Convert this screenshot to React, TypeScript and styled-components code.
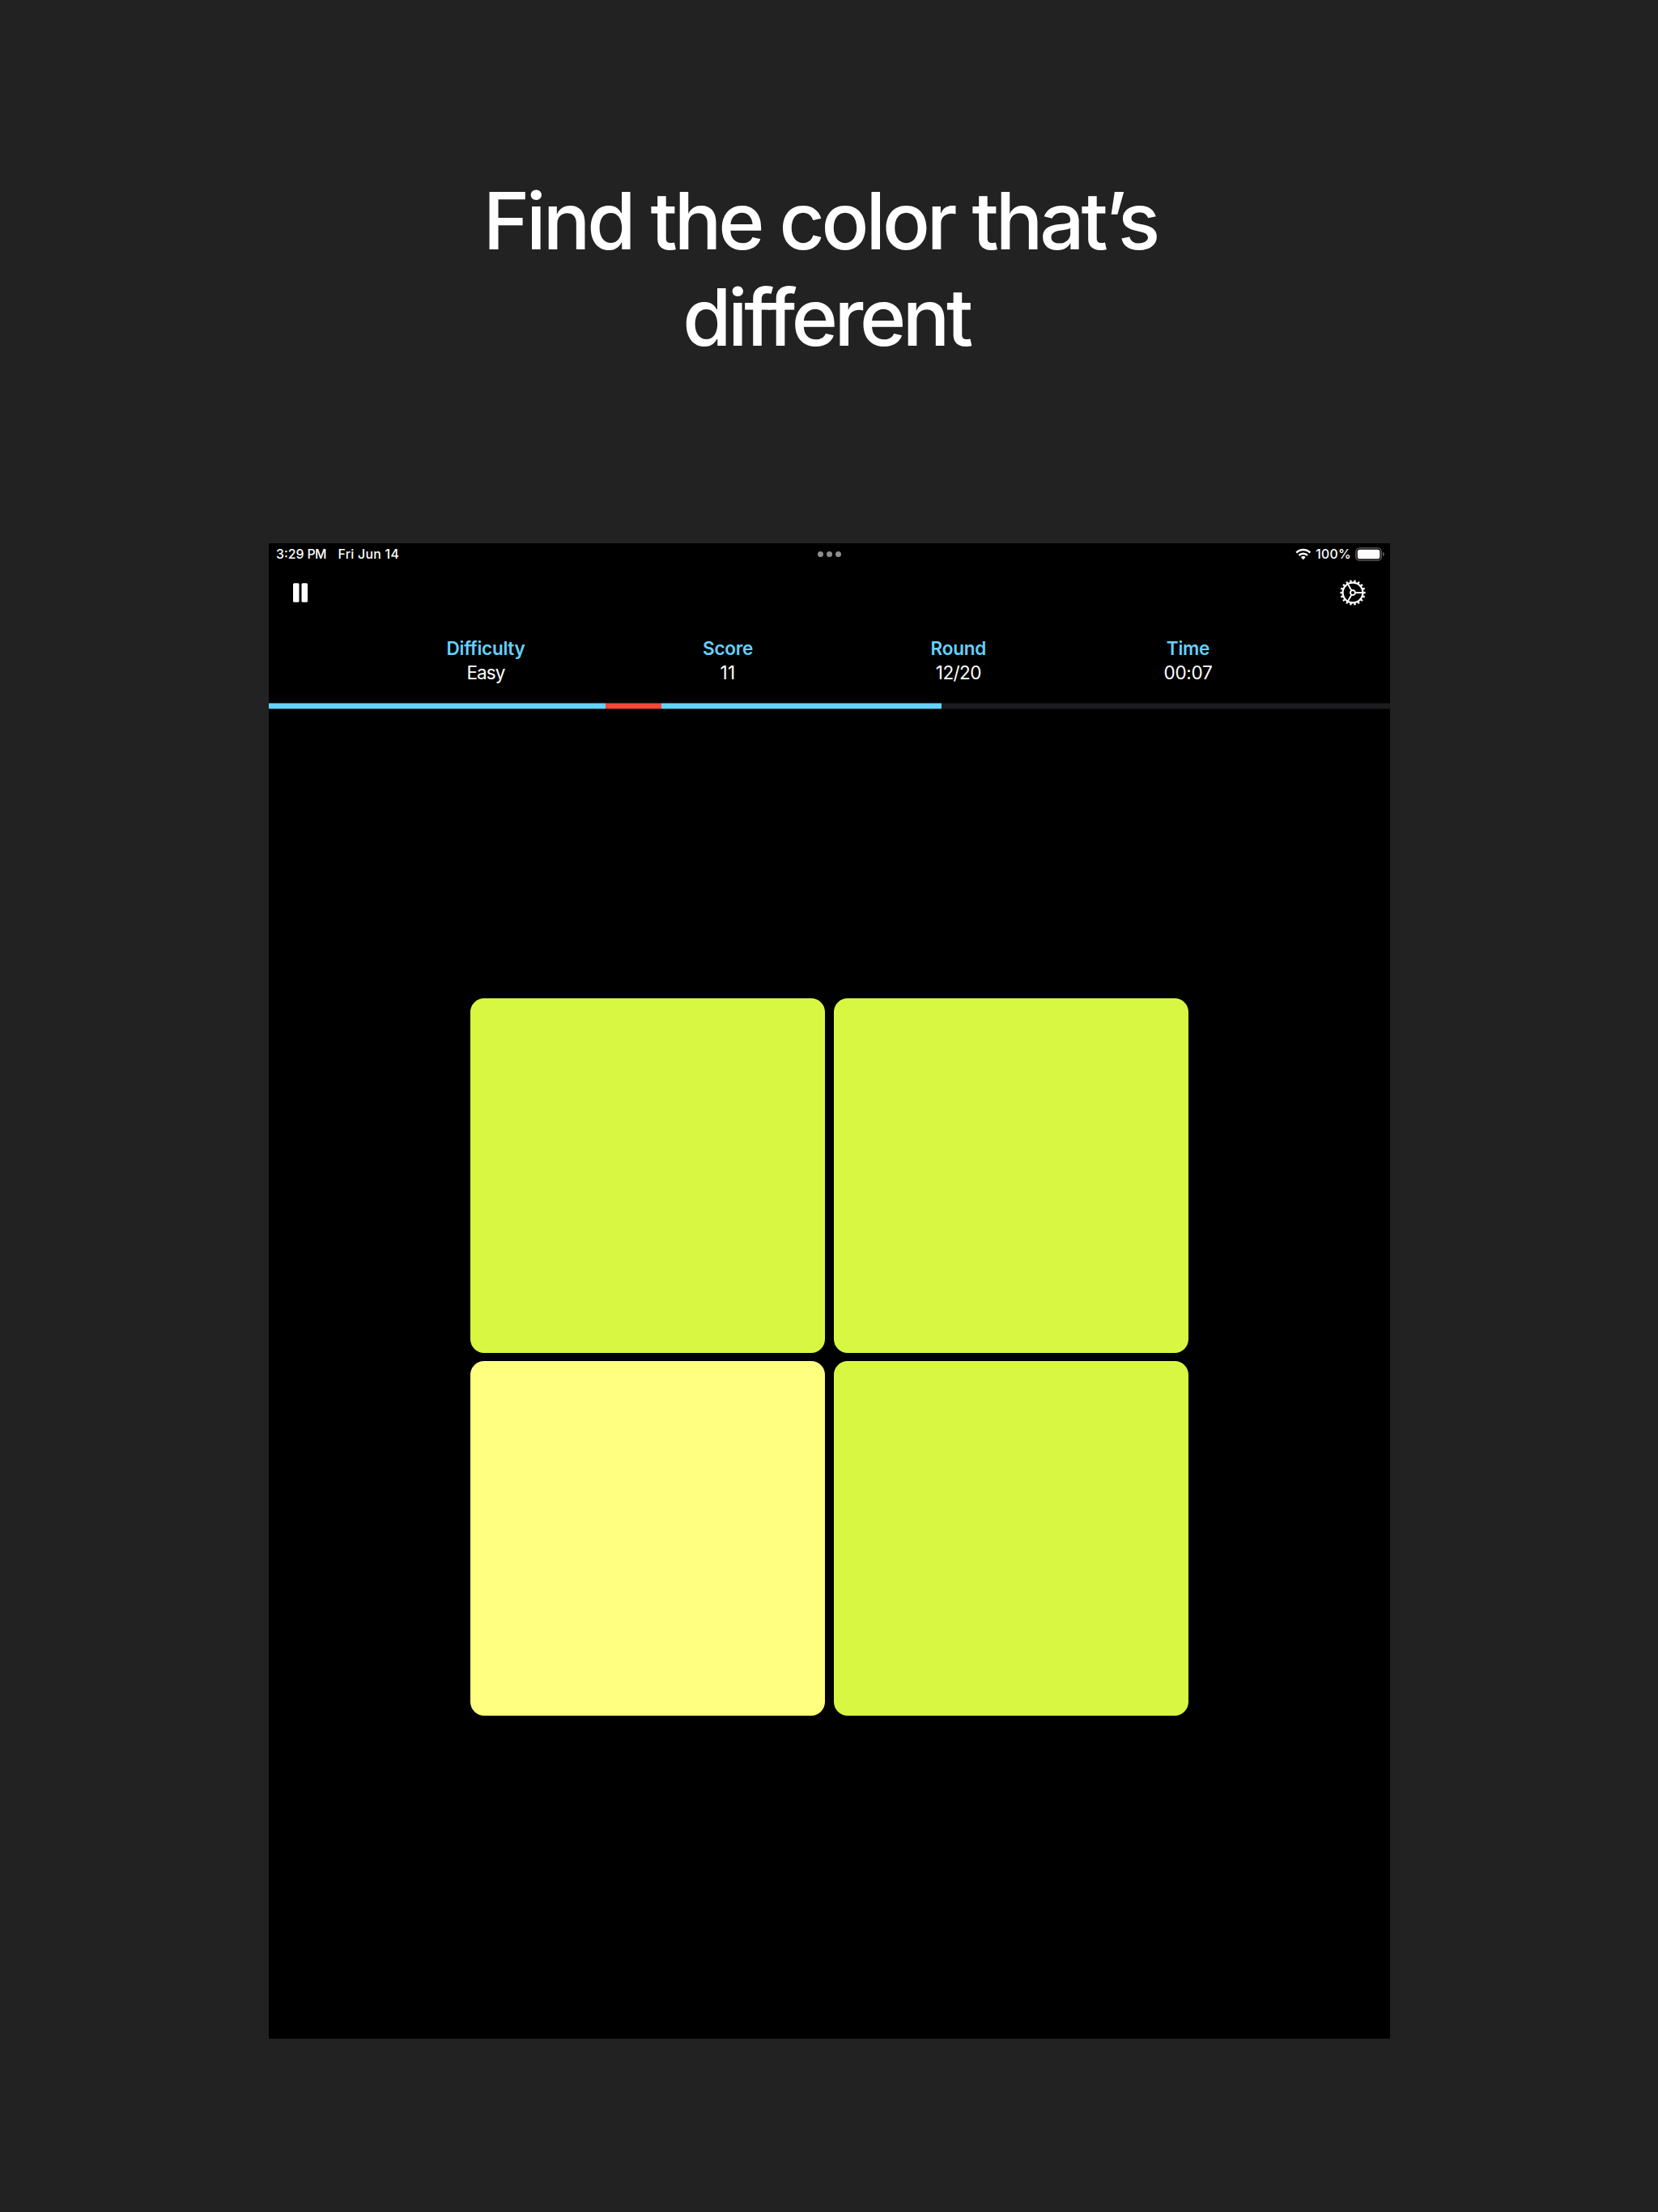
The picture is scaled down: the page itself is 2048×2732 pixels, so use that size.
import React from "react";
import styled, { createGlobalStyle } from "styled-components";

const GlobalStyle = createGlobalStyle`
  *, *::before, *::after { box-sizing: border-box; }
  body {
    margin: 0;
    background: #222222;
    color: #ffffff;
    font-family: Inter, "Liberation Sans", sans-serif;
  }
`;

const Page = styled.main`
  width: 2048px;
  height: 2732px;
  overflow: hidden;
  padding-top: 214px;
  display: flex;
  flex-direction: column;
`;

const Headline = styled.h1`
  margin: 0 0 218px;
  height: 239px;
  display: flex;
  flex-direction: column;
  align-items: center;
  font-size: 97.5px;
  font-weight: 530;
  line-height: 119.3px;
  white-space: nowrap;
`;

const HeadlineLine = styled.span<{ $tracking: number; $trailing: number }>`
  letter-spacing: ${(p) => p.$tracking}px;
  padding-right: ${(p) => p.$trailing}px;
`;

const Screen = styled.section`
  width: 1385px;
  height: 1847px;
  margin-left: 332px;
  background: #000000;
  display: flex;
  flex-direction: column;
`;

const StatusBar = styled.header`
  height: 27px;
  padding: 0 7px 0 9px;
  display: grid;
  grid-template-columns: 1fr auto 1fr;
  align-items: center;
  font-size: 15.8px;
  font-weight: 500;
  line-height: 27px;
  white-space: nowrap;
`;

const StatusGroup = styled.div<{ $end?: boolean }>`
  display: flex;
  align-items: center;
  justify-content: ${(p) => (p.$end ? "flex-end" : "flex-start")};
`;

const Meridiem = styled.span`
  margin-left: 4px;
  letter-spacing: -0.5px;
`;

const DateText = styled.span`
  margin-left: 14.5px;
  letter-spacing: 0.3px;
`;

const BatteryLevel = styled.span`
  margin: 0 5px 0 5.5px;
  letter-spacing: 0.3px;
`;

const Multitasking = styled.div`
  display: flex;
  gap: 4px;
  margin-right: 3px;
`;

const Dot = styled.i`
  width: 7px;
  height: 7px;
  border-radius: 50%;
  background: #8e8e8e;
`;

const NavBar = styled.nav`
  height: 67px;
  padding: 0 30px;
  display: flex;
  align-items: center;
  justify-content: space-between;
`;

const IconButton = styled.button`
  display: flex;
  padding: 0;
  border: 0;
  background: none;
  color: #ffffff;
`;

const Stats = styled.dl`
  margin: 21px 0 22px;
  display: flex;
  justify-content: space-evenly;
  font-size: 22.5px;
  line-height: 30px;
  text-align: center;
`;

const Stat = styled.div`
  display: flex;
  flex-direction: column;
  align-items: center;
`;

const StatLabel = styled.dt`
  color: #64d2ff;
  font-weight: 580;
  letter-spacing: -0.25px;
`;

const StatValue = styled.dd<{ $tracking?: number }>`
  margin: 0;
  letter-spacing: ${(p) => p.$tracking ?? 0}px;
`;

const Track = styled.div`
  height: 8px;
  display: grid;
  grid-template-columns: repeat(20, 1fr);
  background: #1c1c1e;
  box-shadow: inset 0 1px rgba(0, 0, 0, 0.5), inset 0 -1px rgba(0, 0, 0, 0.5);
`;

const Segment = styled.div<{ $wrong: boolean; $span: number }>`
  grid-column: span ${(p) => p.$span};
  background: ${(p) => (p.$wrong ? "#ff453a" : "#64d2ff")};
  box-shadow: inset 0 1px rgba(0, 0, 0, 0.5), inset 0 -1px rgba(0, 0, 0, 0.6);
`;

const Board = styled.div`
  margin-top: 357px;
  display: grid;
  grid-template-columns: repeat(2, 438px);
  grid-auto-rows: 437.6px;
  gap: 10.8px 11px;
  justify-content: center;
`;

const Tile = styled.div<{ $odd?: boolean }>`
  border-radius: 17px;
  background: ${(p) => (p.$odd ? "#ffff80" : "#d8f743")};
`;

const WifiIcon = () => (
  <svg width="20" height="15" viewBox="0 0 20 15" fill="none" stroke="#fff" strokeWidth="2.5">
    <path d="M1.3 5.6a12.1 12.1 0 0 1 17 0" />
    <path d="M4.5 8.9a7.5 7.5 0 0 1 10.6 0" />
    <path d="M9.8 14.2 6.9 11.3a4.1 4.1 0 0 1 5.8 0z" fill="#fff" stroke="none" />
  </svg>
);

const BatteryIcon = () => (
  <svg width="36" height="17" viewBox="0 0 36 17">
    <rect x="0.9" y="0.9" width="31.4" height="15.2" rx="4.6" fill="none" stroke="#626262" strokeWidth="1.4" />
    <rect x="2.8" y="2.8" width="27.6" height="11.4" rx="2.8" fill="#fff" />
    <path d="M34 5.8c1.1.5 1.8 1.5 1.8 2.7s-.7 2.2-1.8 2.7z" fill="#626262" />
  </svg>
);

const PauseIcon = () => (
  <svg width="18" height="24" viewBox="0 0 18 24" fill="currentColor">
    <rect x="0" y="0.2" width="7.5" height="23.6" rx="1.5" />
    <rect x="10.5" y="0.2" width="7.5" height="23.6" rx="1.5" />
  </svg>
);

const teeth = Array.from({ length: 18 }, (_, i) => i * 20);
const spokes = [0, 120, 240];

const GearIcon = () => (
  <svg width="32" height="32" viewBox="-16 -16 32 32" fill="none" stroke="currentColor">
    <circle r="12.4" strokeWidth="2.2" />
    <circle r="3" strokeWidth="1.9" />
    {teeth.map((angle) => (
      <path key={angle} d="M13 0H15.6" strokeWidth="2.3" transform={`rotate(${angle})`} />
    ))}
    {spokes.map((angle) => (
      <path key={angle} d="M3.5 0H12" strokeWidth="1.9" transform={`rotate(${angle})`} />
    ))}
  </svg>
);

const stats = [
  { label: "Difficulty", value: "Easy", tracking: -0.9 },
  { label: "Score", value: "11", tracking: 0.3 },
  { label: "Round", value: "12/20", tracking: -0.6 },
  { label: "Time", value: "00:07", tracking: -0.3 },
];

const progress = [
  { span: 6, wrong: false },
  { span: 1, wrong: true },
  { span: 5, wrong: false },
];

const tiles = [false, false, true, false];

export default function App() {
  return (
    <>
      <GlobalStyle />
      <Page>
        <Headline>
          <HeadlineLine $tracking={-4.05} $trailing={22}>
            Find the color that’s
          </HeadlineLine>
          <HeadlineLine $tracking={-4.45} $trailing={7}>
            different
          </HeadlineLine>
        </Headline>
        <Screen>
          <StatusBar>
            <StatusGroup>
              <span>3:29</span>
              <Meridiem>PM</Meridiem>
              <DateText>Fri Jun 14</DateText>
            </StatusGroup>
            <Multitasking>
              <Dot />
              <Dot />
              <Dot />
            </Multitasking>
            <StatusGroup $end>
              <WifiIcon />
              <BatteryLevel>100%</BatteryLevel>
              <BatteryIcon />
            </StatusGroup>
          </StatusBar>
          <NavBar>
            <IconButton aria-label="Pause">
              <PauseIcon />
            </IconButton>
            <IconButton aria-label="Settings">
              <GearIcon />
            </IconButton>
          </NavBar>
          <Stats>
            {stats.map((s) => (
              <Stat key={s.label}>
                <StatLabel>{s.label}</StatLabel>
                <StatValue $tracking={s.tracking}>{s.value}</StatValue>
              </Stat>
            ))}
          </Stats>
          <Track>
            {progress.map((p, i) => (
              <Segment key={i} $span={p.span} $wrong={p.wrong} />
            ))}
          </Track>
          <Board>
            {tiles.map((odd, i) => (
              <Tile key={i} $odd={odd} />
            ))}
          </Board>
        </Screen>
      </Page>
    </>
  );
}
